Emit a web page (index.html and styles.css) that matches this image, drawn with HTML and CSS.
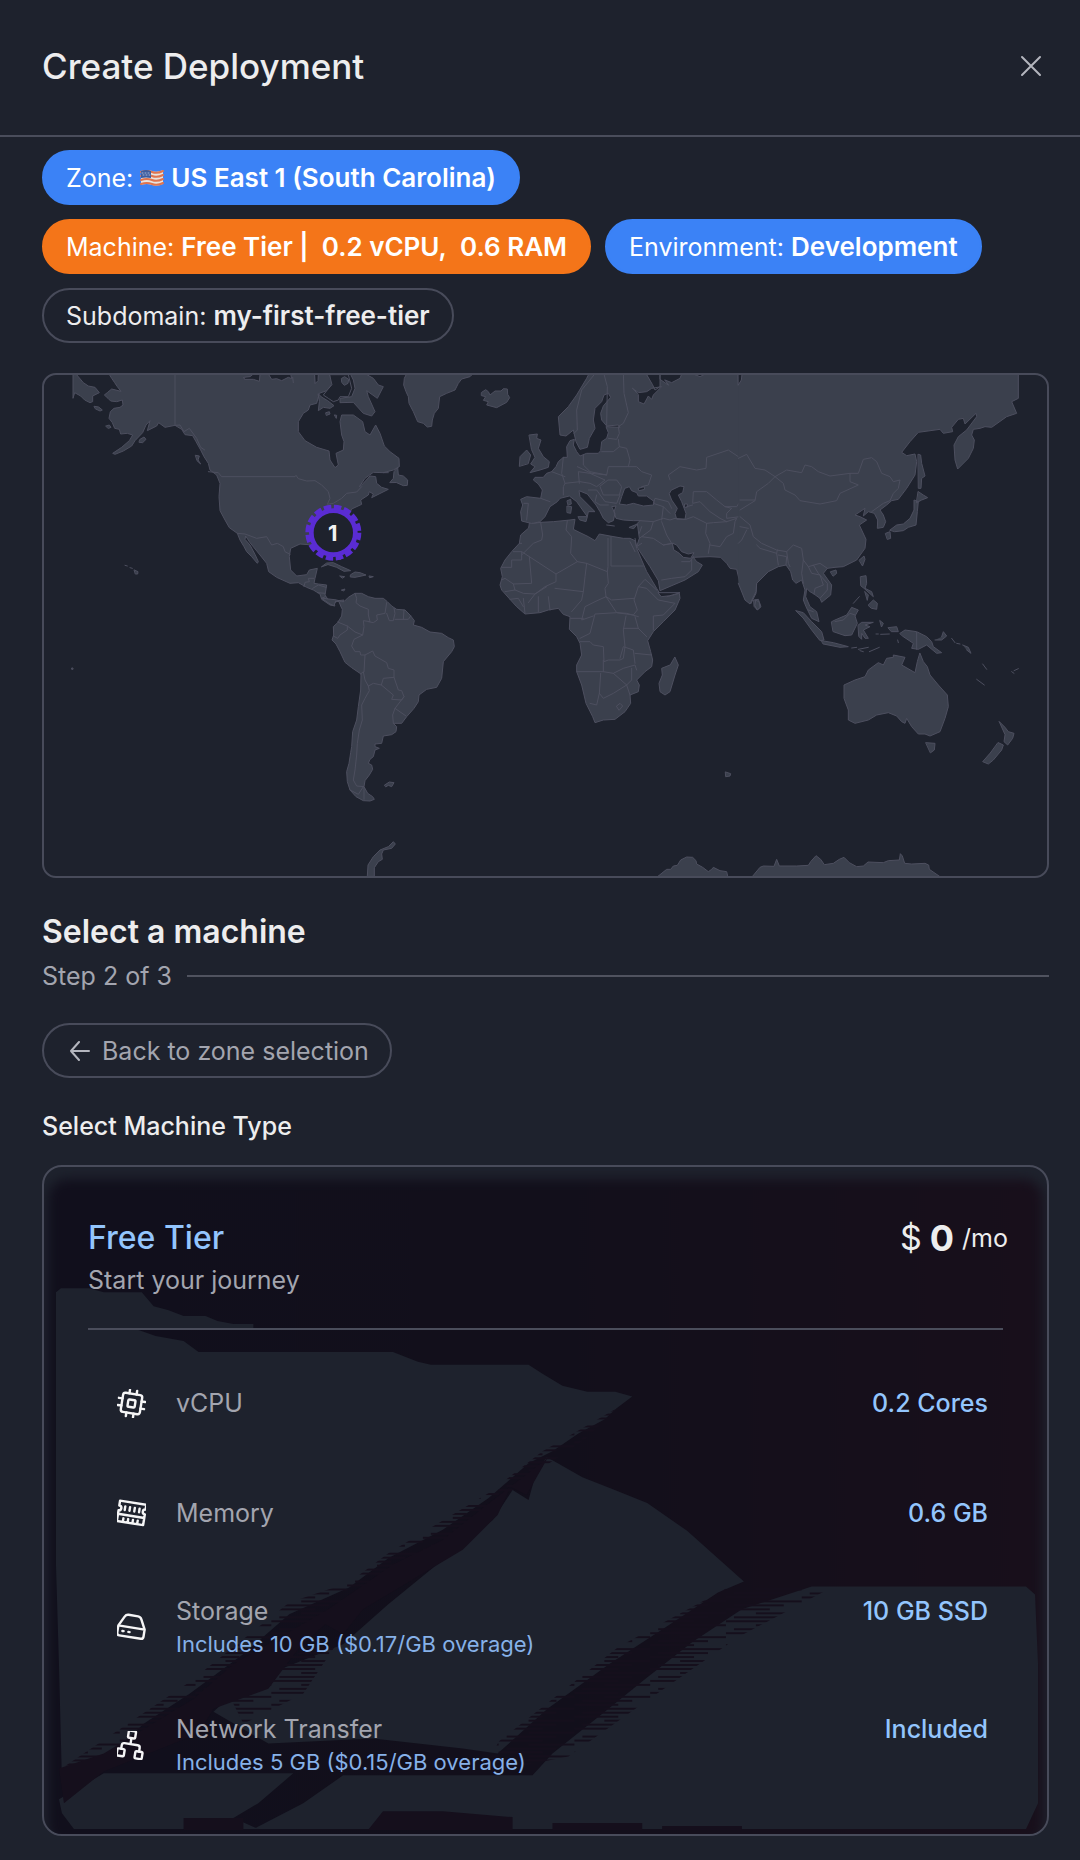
FILE: index.html
```html
<!DOCTYPE html>
<html lang="en">
<head>
<meta charset="utf-8">
<meta name="viewport" content="width=device-width, initial-scale=1">
<title>Create Deployment</title>
<link rel="stylesheet" href="styles.css">
</head>
<body>
<header class="header">
  <h1 class="header-title">Create Deployment</h1>
  <button class="close" type="button" aria-label="Close">
    <svg viewBox="0 0 24 24" width="24" height="24"><path d="M3 3 21 21M21 3 3 21"/></svg>
  </button>
</header>
<main class="content">
  <div class="pills">
    <button class="pill pill-blue" type="button">Zone:
      <svg class="flag" viewBox="0 0 24 18" width="24" height="18" aria-hidden="true">
        <path fill="#e9e3df" d="M1 2Q7 0 12 2T23 1V15Q17 18 12 16T1 16Z"/>
        <path fill="none" stroke="#e0744f" stroke-width="2" d="M1 3Q7 1 12 3T23 2M1 7Q7 5 12 7T23 6M1 11Q7 9 12 11T23 10M1 15Q7 13 12 15T23 14"/>
        <path fill="#3f5c9e" d="M1 2Q6 0 11 2V9Q6 8 1 9Z"/>
        <path fill="none" stroke="#a9b6d6" stroke-dasharray="1 2" d="M2 4H10M3 6H10"/>
      </svg>
      <strong>US East 1 (South Carolina)</strong></button>
    <button class="pill pill-orange" type="button">Machine: <strong>Free Tier |&nbsp; 0.2 vCPU,&nbsp; 0.6 RAM</strong></button>
    <button class="pill pill-blue" type="button">Environment: <strong>Development</strong></button>
    <button class="pill" type="button">Subdomain: <strong>my-first-free-tier</strong></button>
  </div>

  <div class="map">
    <svg class="map-drawing" viewBox="0 0 3009 1503" role="img" aria-label="World map with one zone in the eastern United States">
      <!-- North America -->
      <g class="land" transform="translate(-12 -15)">
        <path d="M203 5 215 25 224 38 232 50 243 64 215 57 203 67 193 75 204 85 212 93 230 95 247 90 249 105 240 112 222 115 211 125 207 145 217 158 224 175 238 178 242 192 262 190 278 195 268 212 245 232 218 250 225 253 250 243 275 228 285 212 308 188 318 165 330 152 322 182 350 168 356 158 375 172 405 166 425 178 435 194 458 197 468 215 482 240 492 260 505 280 510 300 530 315 540 340 537 380 540 422 555 450 568 473 592 490 600 510 612 530 620 545 635 560 652 580 655 575 645 553 630 525 615 508 617 498 630 518 660 555 680 580 686 605 710 622 750 640 775 638 800 652 820 660 840 672 845 688 870 705 885 708 880 700 895 692 905 708 912 690 885 693 865 690 855 675 860 645 835 642 822 640 825 625 832 595 808 600 800 614 770 618 752 600 748 560 752 535 780 522 805 524 840 525 870 530 900 570 905 565 890 530 900 490 920 450 935 417 965 403 962 390 985 375 988 365 1000 372 995 383 1045 358 1025 352 1010 340 1007 320 990 318 965 345 958 350 975 325 1000 307 1030 308 1060 300 1078 290 1077 265 1050 245 1033 228 1020 190 1007 165 990 195 975 185 968 155 940 135 905 135 900 155 905 195 912 215 910 240 888 250 895 285 885 293 870 270 867 243 830 232 795 212 775 185 775 155 790 130 805 120 810 105 830 100 838 70 860 62 878 40 870 5Z"/>
        <path d="M99 5V85L104 68 122 78 134 90 150 98 158 95 158 78 178 68 165 52 145 48 130 38 108 12ZM163 109 176 111 187 120 180 123 167 117ZM198 168 208 165 213 172 206 175ZM300 208 312 201 318 208 308 218 298 217ZM467 256 478 258 474 270 482 282 472 273ZM255 586 262 588M270 593 277 595M283 600 294 605 293 612 287 612ZM845 590 860 579 880 578 905 590 932 602 912 604 890 592 865 584ZM932 614 945 606 960 608 978 615 960 619 945 622 932 621ZM900 618 914 620 908 624ZM988 618 1000 620 990 623ZM1050 337 1060 325 1062 305 1073 292 1075 315 1090 318 1103 330 1102 346 1090 347 1070 338ZM835 72 846 82 863 92 882 107 870 115 850 112 835 122 838 95ZM858 128 868 125 870 132 860 136ZM884 135 890 136 889 144ZM928 5 940 30 945 55 935 80 900 85 900 98 940 97 970 130 995 138 1005 125 985 80 980 62 1012 85 1030 50 1015 45 1000 25 965 5ZM1030 308 1045 308M910 22 918 20 926 32 920 45 910 42Z"/>
        <path class="sea" d="M612 22 630 20 640 12 660 14 658 34 640 28 615 28ZM685 12 695 28 710 26 725 32 745 22 755 26 752 12ZM760 38 758 22M825 12 835 12 834 32 826 40ZM870 14H925L935 55 925 80 900 80 895 90 880 95 865 85 850 75 862 60 875 45Z"/>
        <path d="M905 25 914 20 926 28 924 40 913 46 906 38Z"/>
        <path class="border" d="M405 5V166L420 165 432 185 448 175 470 205 482 232 494 240M505 305 535 308 545 320H765L768 316 775 326 800 333 825 332 845 345 865 365 870 385 862 403 880 400 905 385 920 370 950 366 965 350M592 490 615 492 650 505 680 500 695 525 712 520 730 530 735 545 750 553M792 650 795 637 808 635 805 625H822M818 655 835 645 858 652M832 668 855 670M845 685 856 680"/>
      </g>
      <!-- South America -->
      <g class="land" transform="translate(-12 675)">
        <path d="M845 -5 870 12 882 17 887 3 897 5 902 18 907 28 905 48 893 68 880 80 881 105 876 120 888 132 900 155 915 187 935 203 963 222 962 270 955 320 950 360 938 395 935 440 932 458 927 490 920 515 922 545 930 570 948 590 970 602 990 603 1003 598 998 590 983 580 972 560 975 542 988 525 998 508 995 495 985 490 990 478 1000 470 1005 450 1018 445 1005 440 1005 432 1025 430 1030 408 1055 404 1068 395 1070 380 1060 370 1085 370 1100 350 1122 325 1135 305 1137 285 1160 268 1190 262 1205 235 1210 185 1235 155 1243 140 1240 120 1225 113 1205 100 1170 96 1145 82 1120 75 1123 62 1110 45 1095 30 1070 28 1055 18 1042 5 1030 -5 1005 -5 985 -10 965 -20 945 -20 925 -8 912 5 905 5 890 0Z"/>
        <path d="M1034 555 1048 546 1062 548 1055 560 1045 556 1038 560ZM96 204H99V208H96ZM982 828 984 795 1000 770 1020 750 1045 740 1060 725 1066 732 1055 745 1030 750 1025 762 1027 778 1015 785 1003 803 1003 828ZM905 -30 915 -33 912 -28Z"/>
        <path class="border" d="M945 -20 950 -5 948 8 960 18 985 28 985 45 990 65 970 62 972 80 968 105 945 96 922 78 893 66M922 78 922 90 900 105 893 115 880 108M968 105 942 118 935 138 945 155 960 155 962 165 975 165 998 153 1005 168 1040 188 1045 205 1062 210 1062 232 1030 235 1024 255 1000 250 985 258 975 240 970 215 962 222M975 165 972 215M985 258 988 272 975 295 965 315 967 360 958 390 952 430 950 465 945 510 940 540 950 558 972 560V598M1024 255 1060 285 1055 298 1085 300 1092 290 1085 272 1075 270 1062 232M1092 290 1065 325 1098 348M1065 325 1058 345 1060 370M985 65 1000 68 1012 60 1010 45 1035 40 1040 8M1040 40 1048 62 1060 62 1065 40 1062 25M1065 58H1105L1112 48M1090 58 1092 30M930 570 955 583 970 560"/>
      </g>
      <!-- Greenland and Iceland -->
      <g class="land" transform="translate(1053 -30)">
        <path d="M38 20 28 40 26 60 33 80 40 95 42 115 55 140 68 170 85 175 97 186 110 184 112 165 118 145 130 130 134 95 155 85 180 75 190 55 200 42 225 35 240 20ZM260 82 272 74 280 80 285 90 300 78 318 78 325 71 337 72 338 88 344 98 335 112 305 128 275 120 280 110 265 106 272 95 260 92Z"/>
      </g>
      <!-- Europe, Africa and western Asia -->
      <g class="land" transform="translate(1308 -15)">
        <path d="M150 455 160 460 182 457 220 455 270 450 285 448 280 478 300 488 325 500 345 512 358 492 390 498 430 505 450 505 465 512 470 535 485 570 500 605 530 655 540 672 560 680 598 670 600 685 585 720 550 755 520 785 503 812 512 845 518 870 515 890 495 905 470 930 478 945 475 965 450 975 452 1000 435 1025 405 1048 370 1050 345 1058 338 1040 318 1000 305 945 290 905 290 885 305 855 300 820 290 800 268 778 270 740 250 733 235 715 205 720 180 728 135 732 110 710 90 688 65 660 60 645 67 620 62 595 75 570 95 545 118 520 122 495 145 475Z"/>
        <path d="M153 460 125 453 122 425 128 405 122 388 140 380 182 385 187 360 175 342 160 330 165 322 190 322 200 310 215 305 228 290 235 275 250 262 262 262 260 230 270 212 283 208 280 225 290 245 300 258 320 250 355 250 362 242 365 215 380 205 385 188 378 170 420 172 415 165 380 168 365 150 362 130 370 108 392 82 385 70 372 75 365 95 345 115 340 150 345 175 328 205 322 232 300 238 288 215 280 180 258 198 240 195 235 140 265 110 290 75 320 25 330 5H890V590L865 602 830 640 828 670 812 702 800 690 780 640 770 598 750 595 740 580 722 562 690 560 640 562 650 575 667 585 655 605 615 630 540 662 535 632 510 590 480 545 470 530 478 505 472 460 480 452 460 452 430 450 408 445 402 425 408 408 395 410 405 430 400 452 385 458 370 445 360 425 348 405 322 372 297 362 300 380 345 425 325 425 322 440 290 395 268 378 240 385 232 395 210 410 195 440 180 455Z"/>
        <path d="M148 195 172 192 170 205 183 210 175 235 190 260 208 275 205 292 180 300 150 308 165 290 152 282 165 262 155 240ZM118 288 120 260 140 240 152 255 145 280ZM262 392 272 388 274 402 265 405ZM262 408 275 410 272 430 262 428ZM295 440 322 440 318 455 300 450ZM380 465 403 468M448 472 472 462 462 475ZM585 862 595 885 585 915 570 965 555 975 540 965 537 940 547 915 545 895 570 885ZM822 690 835 688 843 710 832 720 823 710Z"/>
        <path class="sea" d="M435 355 448 350 455 362 470 368 475 378 500 378 523 395 520 405 490 408 460 400 440 405 418 402 425 380ZM475 355 492 350 494 358 478 362ZM575 360 600 348 612 350 608 368 595 375 605 395 618 430 615 448 590 448 585 430 592 415 575 390 568 372ZM578 520 590 525 605 545 625 552 642 548 632 565 610 562 598 550 582 540ZM615 402 622 402 622 412 615 412ZM458 55 475 68 500 65 515 55 545 50 520 75 515 88 505 78 492 102 475 95 475 75ZM500 12H540V50L525 60 518 45ZM555 30 575 38 600 25 605 12H540V28L565 45ZM640 12 660 20 675 12ZM535 668 600 668 570 677 545 680Z"/>
        <path class="border" d="M125 555 160 520 185 510 188 495 182 457M125 520 118 520M65 592H95V570H125V545H100M148 560 155 640 100 642 75 625 65 630M125 545 228 612 292 575 320 580 382 605 384 590V505M228 612V635L195 650 165 672 145 698M292 575 272 550 275 500 258 480 262 452M393 500V588H490M382 605 385 640 375 655 378 680 345 695 315 710 305 750 340 738M320 580 315 620 310 665 225 655M378 680 395 690 462 685M378 680 410 728 460 735 472 720 462 690 475 650 495 628 530 660M475 650 500 655 535 690 585 700 550 735 520 738V780M475 740 440 730 410 728 345 732 330 790 300 805M272 745H310M300 815H330L340 825 370 830 372 875 385 870 420 870 430 865 435 830 430 780 438 738M430 775H475L465 740M475 775 500 800M290 905H370V870M370 905 400 910 430 895 465 885 470 900M455 895 455 930 440 945 400 910M440 945 450 975M362 910 358 970 350 1005 330 1000M358 970 370 985 400 970 440 945M410 1008 420 1000 428 1008 418 1020ZM420 865 430 830 460 840 465 880M465 850 515 855M100 642 105 660 75 665M105 660 130 670 165 672 200 650M130 685 135 730M175 680 175 725M205 680 210 720M90 688 115 685 130 710M310 665 305 690 275 725M385 205 410 208 418 190 415 170 430 160 445 128 432 70 430 5M380 165 382 50 370 5M282 190 292 180 290 120 305 60 350 5M415 208 418 230 400 245 365 245M418 230 440 235 450 270 445 290 385 290 380 315 335 310 292 290M310 255 310 285 330 305 380 315M445 290 470 290 485 305 515 315 505 345 485 350M385 330 410 330 425 350 418 375 370 375 360 350ZM250 262 245 310 255 340 250 350 250 375M215 305 255 320M255 340 300 335 330 340 350 350 375 330 330 310 295 305 298 340M325 360 350 360 375 395 410 400 420 375M350 375 345 395 360 405 385 405M182 385 210 395M132 400 145 400 140 450M545 450 550 410 520 400 525 385 565 395 575 415M550 410 570 430M480 452 520 455 550 445 570 450 585 445 618 448 640 440 680 460 677 490 690 520 685 550M520 455 512 480 485 500M545 455 560 495 575 520 550 525 520 505 485 500 478 505M550 525 580 520M635 570 635 600 615 620 575 625 545 630M605 575 630 575 640 560M570 330 565 315 600 290 650 300 678 295 680 262 745 240 775 260 800 255M780 395 770 410 735 410 710 390 680 365 640 365 638 400 660 395 690 425 720 445 740 455M620 410 638 405M740 455 700 458 680 460M740 455 770 445 765 455 760 490 740 500 720 530 690 525M735 410 755 415 740 430 740 445 780 440M450 515 465 545M465 505 470 530 485 520M478 490 485 470"/>
      </g>
      <!-- East Asia and Oceania -->
      <g class="land" transform="translate(2088 -15)">
        <path d="M-5 5H835V85L815 95 830 130 800 140 755 172 735 170 720 175 700 178 695 195 703 210 700 235 685 265 653 297 645 270 642 225 655 200 680 180 710 140 708 130 675 162 670 145 655 148 635 172 638 185 610 190 600 178 535 187 510 215 485 247 500 257 525 252 530 275 525 315 500 355 475 388 455 392 440 405 420 420 430 435 437 455 430 472 412 475 413 450 403 430 385 425 370 438 375 415 345 435 360 440 380 450 358 465 365 480 378 508 375 535 350 570 310 590 285 592 262 595 250 610 275 645 272 675 245 697 240 685 222 672 210 665 200 655 197 680 210 710 230 725 237 755 215 745 198 710 190 690 195 660 185 630 168 640 158 630 152 605 138 585 115 590 85 605 50 640 48 665 30 702 15 690 -5 640"/>
        <path class="sea" d="M-5 12H6L4 30 -5 45Z"/>
        <path d="M48 690 58 697 60 712 52 720 45 708ZM168 722 190 728 215 755 245 785 252 810 240 812 215 780 190 745ZM245 812 280 818 325 830 300 832 250 822ZM275 755 285 750 320 735 335 712 355 720 345 738 352 760 335 795 315 797 280 785ZM340 700 358 680M362 620 378 617 380 640 375 655 395 665 400 680 372 655 363 648ZM375 665 385 675 382 690ZM385 705 400 690 412 700 410 718 395 715ZM358 570 372 558 375 568 368 587ZM272 605 288 600 290 610 280 618ZM355 765 365 757 400 757 375 765 390 770 370 780 385 805 375 805 365 790 365 808 357 800ZM335 834 350 832M355 838 385 832M388 845 418 832M360 842 370 845M420 752 430 760 425 770ZM408 792 415 792M422 793 448 792M445 773 470 770 475 785 455 785ZM473 810 475 818M480 790 495 780 530 785 560 800 575 815 580 830 605 848 590 850 560 825 535 838 515 835 520 820 490 800ZM585 810 605 810 620 798 610 785 605 800M635 805 645 818M650 820 660 822M668 825 685 832 693 850 680 840M728 882 740 898M710 928 733 945M815 905 822 910M822 902 835 896M437 490 450 485 452 505 443 508ZM450 480 470 465 490 462 510 445 522 420 522 390 535 395 532 425 528 465 505 472 490 482 465 485ZM535 365 550 375 563 383 545 390 530 398ZM535 253 542 255 545 280 555 318 545 325 543 355 536 355ZM558 1118 585 1120 583 1140 572 1148ZM778 1055 795 1072 805 1085 822 1090 818 1105 803 1125 792 1115 795 1095ZM775 1118 790 1125 785 1140 760 1170 745 1182 728 1175 750 1150Z"/>
        <path d="M540 850 550 875 562 890 570 915 595 945 622 975 625 1010 615 1045 600 1085 570 1098 555 1092 535 1092 515 1070 500 1045 495 1060 485 1055 470 1038 445 1028 410 1035 385 1050 345 1060 325 1050 325 1020 312 985 312 945 345 930 375 920 385 900 415 878 430 885 440 865 460 862 460 855 495 862 485 885 525 908 532 875Z"/>
        <path class="border" d="M-5 265 20 253 45 295 75 300 105 320 85 340 50 365 45 392 0 420M0 390H45M105 320 140 300 185 308 195 285 215 290 235 305 270 318 330 310 355 310 370 268 395 263 410 275 425 310 450 320 460 335 480 330 475 355 460 370 450 392 430 400 395 425M105 320 130 340 135 360 165 375 180 392 240 402 290 392 300 370 355 345 330 335 330 310M0 440 30 465 40 500 65 520 110 540 140 545 160 525 185 535 190 570 205 590 240 580 262 595M50 525 60 535 110 550 112 540M110 550 115 585M140 545 145 580 150 590M190 570 185 610 190 640M205 590 215 610 240 615 250 645 225 655 222 672M220 585 235 610 262 640 262 660 240 685M530 787V838M0 470 25 475M20 480 5 510 -5 520M285 755 310 750 330 730 345 735M115 555 140 560 138 585M205 720 220 725"/>
      </g>
      <!-- Antarctica -->
      <g class="land" transform="translate(1788 1155)">
        <path d="M50 352 80 328 92 328 100 318 112 316 122 300 140 291 158 292 168 302 170 312 188 322 205 335 215 328 220 322 240 332 260 335 264 352ZM335 352 360 322 370 318 402 319 410 298 418 318 470 318 505 316 512 305 528 287 542 298 553 314 580 310 598 298 612 292 628 308 650 320 670 318 684 306 730 308 745 302 778 300 781 281 787 288 794 310 815 312 855 310 866 315 868 328 900 350ZM257 36 272 41 270 48 258 50Z"/>
      </g>
      <!-- Zone marker -->
      <g class="marker" transform="translate(868 473)">
        <circle class="marker-body" r="66"/>
        <circle class="marker-teeth" r="75" pathLength="240"/>
        <text class="marker-count" x="-2" y="25">1</text>
      </g>
    </svg>
  </div>

  <h2 class="step-title">Select a machine</h2>
  <div class="step"><span>Step 2 of 3</span><span class="step-line"></span></div>
  <button class="pill back" type="button">
    <svg viewBox="0 0 20 20" width="20" height="20" aria-hidden="true"><path d="M19 10H1M9 1 1 10 9 19"/></svg>
    Back to zone selection
  </button>
  <h3 class="type-title">Select Machine Type</h3>

  <section class="card">
    <svg class="card-art" viewBox="0 0 1006 671" preserveAspectRatio="none" aria-hidden="true">
      <defs>
        <linearGradient id="night"><stop offset="0" stop-color="#110f1c"/><stop offset=".5" stop-color="#120f1b"/><stop offset="1" stop-color="#180f1b"/></linearGradient>
        <pattern id="streaks" width="76" height="12" patternUnits="userSpaceOnUse"><path fill="#150f1c" d="M0 0H44V2H0ZM30 4H76V6H30ZM8 8H58V10H8Z"/></pattern>
        <filter id="soft" x="-5%" y="-5%" width="110%" height="110%" color-interpolation-filters="sRGB"><feGaussianBlur stdDeviation="6"/></filter>
      </defs>
      <rect fill="url(#night)" filter="url(#soft)" x="4" y="12" width="998" height="670" rx="20"/>
      <path class="slate" d="M12 126 17 122H45L60 126H98L110 140 125 144 140 150H162L174 155 190 158H210V163H92L112 170 140 175 155 186H350L375 196 388 199H486L500 208 520 220 545 226H573L590 231 574 243 562 254 536 268 510 286 486 298 446 333 400 365 346 393 306 423 246 450 200 490 146 530 100 560 62 595 18 618 15 500 12 400Z"/>
      <path class="slate" d="M504 292 510 295 540 312 570 324 605 338 645 366 702 417 676 428 625 462 567 500 505 545 455 590 420 585 330 575 225 580 170 548 200 520 300 480 345 440 400 395 450 355 470 325 486 335 494 306Z"/>
      <path class="slate" d="M770 422H985L994 430 997 500 997 640 985 666H210L260 640 300 612H490L510 590 560 550 603 515 650 478 700 445Z"/>
      <path class="slate" d="M15 636 60 610H250L215 640 190 655 215 666H30L18 650Z"/>
      <path fill="#150f1c" d="M505 293 484 330 468 322 455 350 420 385 320 445 300 470 282 460 255 485 225 525 170 545 155 570 60 608 20 640 15 605 60 590 150 535 190 500 285 445 350 400 400 375 440 343Z"/>
      <path fill="url(#streaks)" d="M574 243 545 272 486 312 400 380 200 510 60 600 16 606 146 518 246 438 306 418 346 388 446 328 500 286ZM686 423H790L696 473 596 543 526 593 440 610 456 578 576 483ZM180 520 230 500 300 470 260 530 200 560Z"/>
      <path fill="#150f1c" d="M325 667 340 648H400L470 654V667ZM140 667V655H200V667ZM510 667V660H600V667ZM620 667V663H700V667Z"/>
    </svg>
    <div class="card-head">
      <div>
        <h4 class="tier">Free Tier</h4>
        <p class="tagline">Start your journey</p>
      </div>
      <p class="price"><span class="currency">$</span><strong class="amount">0</strong><span>/mo</span></p>
    </div>
    <hr class="divider">
    <dl class="specs">
      <div class="spec">
        <svg class="spec-icon" viewBox="0 0 24 24" aria-hidden="true"><g transform="rotate(9 12 12)"><rect x="4" y="4" width="16" height="16" rx="2"/><rect x="9" y="9" width="6" height="6" rx="1"/><path d="M9 4V1M15 4V1M9 23V20M15 23V20M4 9H1M4 15H1M23 9H20M23 15H20"/></g></svg>
        <dt>vCPU</dt>
        <dd>0.2 Cores</dd>
      </div>
      <div class="spec">
        <svg class="spec-icon" viewBox="0 0 24 24" aria-hidden="true"><g transform="rotate(9 12 12)"><path d="M1 14V20H23V14M1 14H23M1 14V11A2 2 0 0 0 1 7V3H23V7A2 2 0 0 0 23 11V14M6 7V10M10 7V10M14 7V10M18 7V10M6 17V20M10 17V20M14 17V20M18 17V20"/></g></svg>
        <dt>Memory</dt>
        <dd>0.6 GB</dd>
      </div>
      <div class="spec">
        <svg class="spec-icon" viewBox="0 0 24 24" aria-hidden="true"><g transform="rotate(9 12 12)"><path d="M1 12 5 4Q6 2 8 2H16Q18 2 19 4L23 12V18Q23 20 21 20H3Q1 20 1 18ZM1 12H23M5 16H6M10 16H11"/></g></svg>
        <dt>Storage<small>Includes 10 GB ($0.17/GB overage)</small></dt>
        <dd>10 GB SSD</dd>
      </div>
      <div class="spec">
        <svg class="spec-icon" viewBox="0 0 24 24" aria-hidden="true"><g transform="rotate(9 12 12)"><rect x="8" y="0" width="6" height="6" rx="1"/><rect x="1" y="16" width="6" height="6" rx="1"/><rect x="16" y="16" width="6" height="6" rx="1"/><path d="M11 6V11M4 16V13Q4 11 6 11H17Q19 11 19 13V16"/></g></svg>
        <dt>Network Transfer<small>Includes 5 GB ($0.15/GB overage)</small></dt>
        <dd>Included</dd>
      </div>
    </dl>
  </section>
</main>
</body>
</html>
```
FILE: styles.css
```css
* { box-sizing: border-box; }
body {
  margin: 0;
  background: #1e222d;
  color: #ededee;
  font: 400 25px/34px Inter, "Liberation Sans", sans-serif;
}
h1, h2, h3, h4, p, dl, dd { margin: 0; }
button { font: inherit; color: inherit; cursor: pointer; }
svg { fill: none; stroke-linecap: round; stroke-linejoin: round; }

.header {
  display: flex;
  align-items: center;
  justify-content: space-between;
  height: 137px;
  padding: 0 37px 4px 42px;
  border-bottom: 2px solid #4a4d5b;
}
.header-title { font-size: 35px; line-height: 44px; font-weight: 500; }
.close { display: flex; padding: 0; border: 0; background: none; }
.close svg { stroke: #b4b6be; stroke-width: 2; }

.content { padding: 13px 31px 24px 42px; }
.pills { display: flex; flex-wrap: wrap; gap: 14px; padding-right: 40px; }
.pill {
  height: 55px;
  padding: 0 22px;
  border: 2px solid #484b5a;
  border-radius: 28px;
  background: none;
  white-space: nowrap;
}
.pill strong { font-size: 26px; font-weight: 600; }
.pill-blue { background: #3b82f6; border-color: #3b82f6; color: #fff; }
.pill-orange { background: #f47519; border-color: #f47519; color: #fff; }

.map {
  margin-top: 30px;
  border: 2px solid #484b5a;
  border-radius: 14px;
  overflow: hidden;
}
.map-drawing { display: block; width: 100%; }
.land { fill: #3b404d; stroke: #4d4f5f; stroke-width: 3; }
.sea { fill: #1e222d; }
.border { fill: none; }
.marker-body { fill: #1e222d; stroke: #5a2cd3; stroke-width: 14; }
.marker-teeth { stroke: #5a2cd3; stroke-width: 18; stroke-dasharray: 11 4; stroke-linecap: butt; }
.marker-count { fill: #f2f2f2; font-size: 66px; font-weight: 700; text-anchor: middle; }

.step-title { margin-top: 35px; font-size: 32px; line-height: 38px; font-weight: 600; }
.step { display: flex; align-items: center; gap: 15px; margin-top: 8px; color: #a3a5af; }
.step-line { flex: 1; height: 2px; background: #50535f; }
.back { display: flex; align-items: center; gap: 12px; margin-top: 30px; padding: 0 21px 0 26px; color: #a3a5af; }
.back svg { stroke: #b4b6be; stroke-width: 2; }
.type-title { margin-top: 31px; font-size: 25px; font-weight: 500; }

.card {
  position: relative;
  margin-top: 22px;
  padding: 52px 0 30px;
  border: 2px solid #484b5a;
  border-radius: 20px;
  overflow: hidden;
}
.card-art { position: absolute; inset: 0; width: 100%; height: 100%; }
.slate { fill: #1e222d; }
.card-head, .divider, .specs { position: relative; }
.card-head { display: flex; align-items: flex-start; justify-content: space-between; padding: 0 39px 0 44px; }
.tier { font-size: 32px; line-height: 38px; font-weight: 500; color: #93c5fd; }
.tagline { margin-top: 6px; color: #a3a5af; }
.price { display: flex; align-items: center; gap: 8px; line-height: 38px; }
.currency { font-size: 34px; }
.amount { font-size: 36px; font-weight: 700; }
.divider { height: 2px; margin: 31px 44px 18px; border: 0; background: #4a4d5b; }
.specs { padding: 0 59px 0 73px; }
.spec { display: flex; align-items: center; min-height: 110px; padding: 26px 0; }
.spec-icon { width: 29px; height: 29px; margin-right: 30px; stroke: #f5f5f6; stroke-width: 2; }
.spec dt { flex: 1; color: #a3a5af; }
.spec small { display: block; font-size: 22px; line-height: 32px; color: #86b1e8; }
.spec dd { font-weight: 500; color: #93c5fd; }
.spec:has(small) dd { align-self: flex-start; }
```
